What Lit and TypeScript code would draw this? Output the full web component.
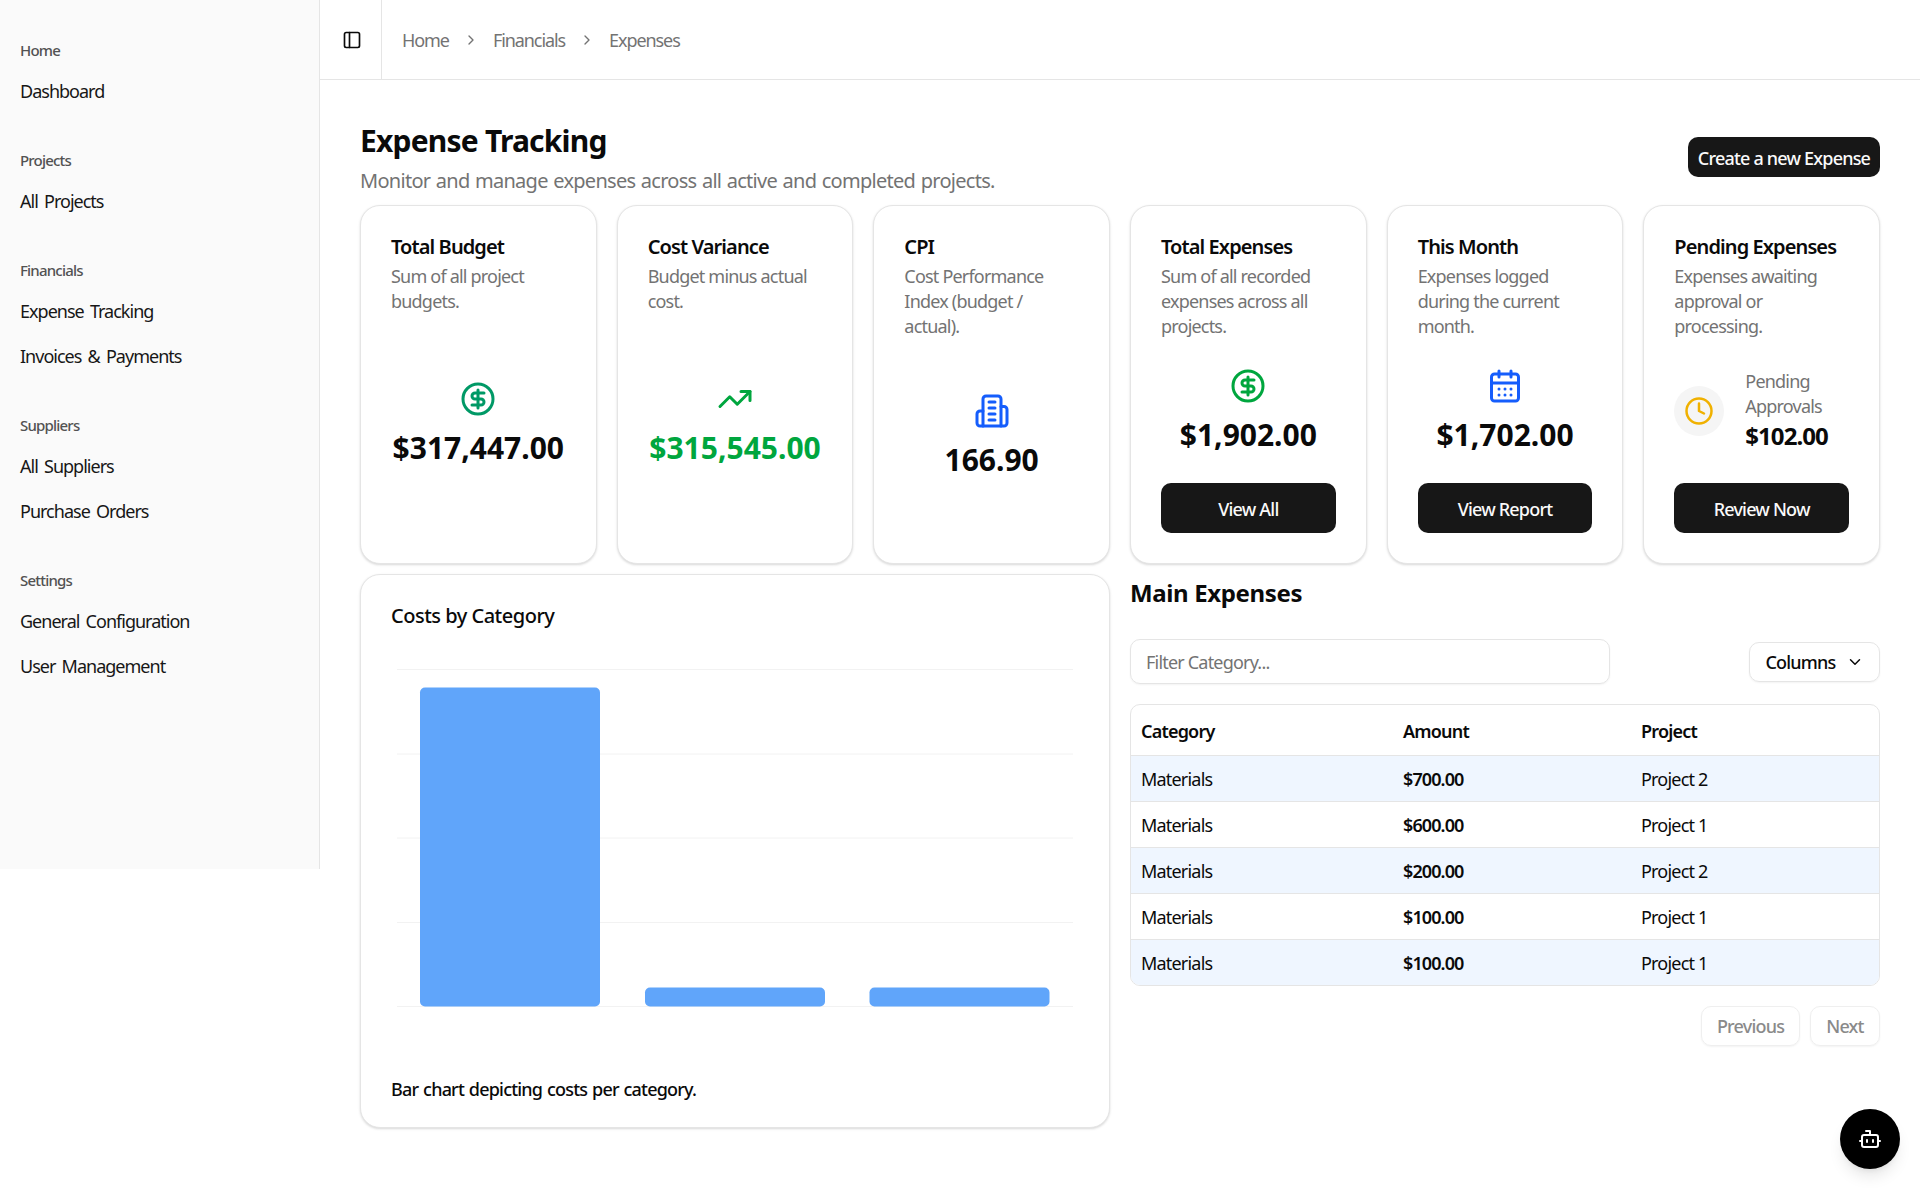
import { LitElement, css, html, svg } from "lit";
import { customElement } from "lit/decorators.js";

const icons = {
  panel: svg`<rect x="3" y="3" width="18" height="18" rx="2"/><path d="M9 3v18"/>`,
  chevronRight: svg`<path d="m9 18 6-6-6-6"/>`,
  chevronDown: svg`<path d="m6 9 6 6 6-6"/>`,
  dollar: svg`<circle cx="12" cy="12" r="10"/><path d="M16 8h-6a2 2 0 1 0 0 4h4a2 2 0 1 1 0 4H8"/><path d="M12 18V6"/>`,
  trending: svg`<polyline points="22 7 13.5 15.5 8.5 10.5 2 17"/><polyline points="16 7 22 7 22 13"/>`,
  building: svg`<path d="M6 22V4a2 2 0 0 1 2-2h8a2 2 0 0 1 2 2v18Z"/><path d="M6 12H4a2 2 0 0 0-2 2v6a2 2 0 0 0 2 2h2"/><path d="M18 9h2a2 2 0 0 1 2 2v9a2 2 0 0 1-2 2h-2"/><path d="M10 6h4"/><path d="M10 10h4"/><path d="M10 14h4"/><path d="M10 18h4"/>`,
  calendar: svg`<path d="M8 2v4"/><path d="M16 2v4"/><rect x="3" y="4" width="18" height="18" rx="2"/><path d="M3 10h18"/><path d="M8 14h.01"/><path d="M12 14h.01"/><path d="M16 14h.01"/><path d="M8 18h.01"/><path d="M12 18h.01"/><path d="M16 18h.01"/>`,
  clock: svg`<circle cx="12" cy="12" r="10"/><polyline points="12 6 12 12 16 14"/>`,
  bot: svg`<path d="M12 8V4H8"/><rect x="4" y="8" width="16" height="12" rx="2"/><path d="M2 14h2"/><path d="M20 14h2"/><path d="M15 13v2"/><path d="M9 13v2"/>`,
};

function icon(name: keyof typeof icons, size: number, color = "currentColor") {
  return html`<svg
    width=${size}
    height=${size}
    viewBox="0 0 24 24"
    fill="none"
    stroke=${color}
    stroke-width="2"
    stroke-linecap="round"
    stroke-linejoin="round"
  >${icons[name]}</svg>`;
}

const navGroups = [
  { label: "Home", items: ["Dashboard"] },
  { label: "Projects", items: ["All Projects"] },
  { label: "Financials", items: ["Expense Tracking", "Invoices & Payments"] },
  { label: "Suppliers", items: ["All Suppliers", "Purchase Orders"] },
  { label: "Settings", items: ["General Configuration", "User Management"] },
];

const rows = [
  ["Materials", "$700.00", "Project 2"],
  ["Materials", "$600.00", "Project 1"],
  ["Materials", "$200.00", "Project 2"],
  ["Materials", "$100.00", "Project 1"],
  ["Materials", "$100.00", "Project 1"],
];

const gridLines = [19.5, 104, 188, 272.5, 356.5];
const bars = [
  { x: 29, y: 37.5, w: 180, h: 319 },
  { x: 254, y: 337.5, w: 180, h: 19 },
  { x: 478.5, y: 337.5, w: 180, h: 19 },
];

@customElement("app-root")
export class AppRoot extends LitElement {
  static styles = css`
    :host {
      display: block;
      position: relative;
      width: 1920px;
      height: 1188px;
      overflow: hidden;
      background: #fff;
      color: #0a0a0a;
      font-family: "Noto Sans", "Open Sans", sans-serif;
      letter-spacing: -0.05em;
    }
    * {
      box-sizing: border-box;
      margin: 0;
      padding: 0;
    }
    svg {
      display: block;
      flex: none;
    }
    .layout {
      display: flex;
      align-items: flex-start;
    }
    .sidebar {
      width: 320px;
      height: 869px;
      flex: none;
      padding-top: 21px;
      background: #fafafa;
      border-right: 1px solid #e5e5e5;
    }
    .group {
      padding: 10px 0 18px 20px;
    }
    .group-label {
      height: 37px;
      display: flex;
      align-items: center;
      font-size: 15px;
      font-weight: 500;
      color: #525252;
    }
    .nav-item {
      height: 45px;
      display: flex;
      align-items: center;
      font-size: 18px;
      color: #171717;
      letter-spacing: -0.055em;
      word-spacing: 2.5px;
    }
    .content {
      flex: 1;
      min-width: 0;
    }
    .topbar {
      height: 80px;
      display: flex;
      align-items: center;
      border-bottom: 1px solid #e5e5e5;
    }
    .trigger {
      width: 62px;
      height: 100%;
      display: flex;
      align-items: center;
      justify-content: center;
      padding-left: 3px;
      border-right: 1px solid #e5e5e5;
      color: #0a0a0a;
    }
    .crumbs {
      display: flex;
      align-items: center;
      gap: 14px;
      margin-left: 20px;
      font-size: 18px;
      color: #737373;
      letter-spacing: -0.06em;
    }
    main {
      padding: 40px 40px 0;
    }
    .page-head {
      height: 75px;
      display: flex;
      align-items: center;
      justify-content: space-between;
    }
    h1 {
      font-size: 30px;
      line-height: 40px;
      font-weight: 700;
      padding-top: 1px;
    }
    .subtitle {
      margin-top: 6px;
      font-size: 20px;
      line-height: 28px;
      color: #737373;
      letter-spacing: -0.036em;
      word-spacing: 1px;
    }
    .btn {
      display: flex;
      align-items: center;
      justify-content: center;
      padding-top: 2px;
      border-radius: 10px;
      background: #171717;
      color: #fafafa;
      font-size: 18px;
      font-weight: 500;
    }
    .create {
      width: 192px;
      height: 40px;
      margin-top: -1px;
    }
    .stats {
      display: grid;
      grid-template-columns: repeat(6, 1fr);
      gap: 20px;
      margin-top: 10px;
    }
    .card {
      background: #fff;
      border: 1px solid #e5e5e5;
      border-radius: 20px;
      box-shadow: 0 1px 3px rgba(0, 0, 0, 0.1), 0 1px 2px rgba(0, 0, 0, 0.06);
    }
    .stat {
      height: 359px;
      display: flex;
      flex-direction: column;
      padding: 30px;
    }
    .card-title {
      font-size: 20px;
      line-height: 22px;
      font-weight: 600;
      letter-spacing: -0.045em;
    }
    .card-desc {
      margin-top: 6px;
      font-size: 18px;
      line-height: 25px;
      color: #737373;
    }
    .stat-body {
      flex: 1;
      display: flex;
      flex-direction: column;
      align-items: center;
      justify-content: center;
      gap: 12px;
    }
    .value {
      font-size: 30px;
      line-height: 38px;
      font-weight: 700;
      letter-spacing: 0;
    }
    .value.green {
      color: #00a63e;
    }
    .stat .btn {
      height: 50px;
    }
    .pending {
      flex: 1;
      display: flex;
      align-items: center;
      gap: 21px;
    }
    .clock-wrap {
      width: 50px;
      height: 50px;
      flex: none;
      display: flex;
      align-items: center;
      justify-content: center;
      border-radius: 50%;
      background: #f5f5f5;
    }
    .pending-label {
      font-size: 18px;
      line-height: 25px;
      color: #737373;
    }
    .pending-value {
      font-size: 24px;
      line-height: 34px;
      font-weight: 700;
      letter-spacing: -0.04em;
    }
    .lower {
      display: grid;
      grid-template-columns: 1fr 1fr;
      gap: 20px;
      align-items: start;
      margin-top: 10px;
    }
    .chart-card {
      padding: 30px 30px 25px;
    }
    .chart-title {
      font-size: 20px;
      line-height: 22px;
      font-weight: 500;
      letter-spacing: -0.025em;
    }
    .chart {
      margin-top: 23px;
    }
    .chart-caption {
      margin-top: 27px;
      font-size: 18px;
      line-height: 25px;
      font-weight: 500;
      letter-spacing: -0.045em;
      word-spacing: 1px;
    }
    h2 {
      font-size: 24px;
      line-height: 38px;
      font-weight: 700;
      letter-spacing: -0.015em;
    }
    .toolbar {
      display: flex;
      align-items: center;
      justify-content: space-between;
      margin-top: 27px;
    }
    .filter {
      width: 480px;
      height: 45px;
      display: flex;
      align-items: center;
      padding-left: 15px;
      border: 1px solid #e5e5e5;
      border-radius: 10px;
      font-size: 18px;
      color: #737373;
      box-shadow: 0 1px 2px rgba(0, 0, 0, 0.05);
    }
    .outline {
      height: 40px;
      display: flex;
      align-items: center;
      justify-content: center;
      border: 1px solid #e5e5e5;
      border-radius: 10px;
      font-size: 18px;
      font-weight: 500;
      box-shadow: 0 1px 2px rgba(0, 0, 0, 0.05);
    }
    .columns {
      width: 131px;
      gap: 10px;
    }
    .table-wrap {
      margin-top: 20px;
      border: 1px solid #e5e5e5;
      border-radius: 10px;
      overflow: hidden;
    }
    table {
      width: 100%;
      border-collapse: collapse;
      table-layout: fixed;
      font-size: 18px;
    }
    th {
      height: 50px;
      padding: 2px 10px 0;
      text-align: left;
      font-weight: 600;
      border-bottom: 1px solid #e5e5e5;
    }
    td {
      height: 46px;
      padding: 2px 10px 0;
      border-bottom: 1px solid #e5e5e5;
    }
    tr:last-child td {
      border-bottom: none;
    }
    tbody tr:nth-child(odd) {
      background: #eff6ff;
    }
    .amount {
      font-weight: 600;
      letter-spacing: -0.05em;
    }
    .pager {
      display: flex;
      justify-content: flex-end;
      gap: 10px;
      margin-top: 20px;
    }
    .pager .outline {
      color: #8a8a8a;
      border-color: #efefef;
    }
    .prev {
      width: 99px;
    }
    .next {
      width: 70px;
    }
    .fab {
      position: absolute;
      left: 1840px;
      top: 1109px;
      width: 60px;
      height: 60px;
      display: flex;
      align-items: center;
      justify-content: center;
      border-radius: 50%;
      background: #000;
      color: #fff;
      box-shadow: 0 10px 15px -3px rgba(0, 0, 0, 0.1), 0 4px 6px -4px rgba(0, 0, 0, 0.1);
    }
  `;

  renderStat(title: string, desc: string, body: unknown) {
    return html`<div class="card stat">
      <div class="card-title">${title}</div>
      <div class="card-desc">${desc}</div>
      ${body}
    </div>`;
  }

  renderValue(name: keyof typeof icons, color: string, value: string, green = false) {
    return html`<div class="stat-body">
      ${icon(name, 36, color)}
      <div class="value ${green ? "green" : ""}">${value}</div>
    </div>`;
  }

  render() {
    return html`
      <div class="layout">
        <aside class="sidebar">
          ${navGroups.map(
            (g) => html`<div class="group">
              <div class="group-label">${g.label}</div>
              ${g.items.map((i) => html`<div class="nav-item">${i}</div>`)}
            </div>`
          )}
        </aside>
        <div class="content">
          <header class="topbar">
            <div class="trigger">${icon("panel", 20)}</div>
            <nav class="crumbs">
              <span>Home</span>
              ${icon("chevronRight", 16)}
              <span>Financials</span>
              ${icon("chevronRight", 16)}
              <span>Expenses</span>
            </nav>
          </header>
          <main>
            <div class="page-head">
              <div>
                <h1>Expense Tracking</h1>
                <p class="subtitle">Monitor and manage expenses across all active and completed projects.</p>
              </div>
              <div class="btn create">Create a new Expense</div>
            </div>
            <section class="stats">
              ${this.renderStat("Total Budget", "Sum of all project budgets.", this.renderValue("dollar", "#009966", "$317,447.00"))}
              ${this.renderStat("Cost Variance", "Budget minus actual cost.", this.renderValue("trending", "#00a63e", "$315,545.00", true))}
              ${this.renderStat("CPI", "Cost Performance Index (budget / actual).", this.renderValue("building", "#155dfc", "166.90"))}
              ${this.renderStat(
                "Total Expenses",
                "Sum of all recorded expenses across all projects.",
                html`${this.renderValue("dollar", "#00a63e", "$1,902.00")}<div class="btn">View All</div>`
              )}
              ${this.renderStat(
                "This Month",
                "Expenses logged during the current month.",
                html`${this.renderValue("calendar", "#155dfc", "$1,702.00")}<div class="btn">View Report</div>`
              )}
              ${this.renderStat(
                "Pending Expenses",
                "Expenses awaiting approval or processing.",
                html`<div class="pending">
                    <div class="clock-wrap">${icon("clock", 30, "#f0b100")}</div>
                    <div>
                      <div class="pending-label">Pending Approvals</div>
                      <div class="pending-value">$102.00</div>
                    </div>
                  </div>
                  <div class="btn">Review Now</div>`
              )}
            </section>
            <section class="lower">
              <div class="card chart-card">
                <div class="chart-title">Costs by Category</div>
                <svg class="chart" width="688" height="400" viewBox="0 0 688 400">
                  ${gridLines.map((y) => svg`<line x1="6" x2="682" y1=${y} y2=${y} stroke="#f2f2f2" />`)}
                  ${bars.map((b) => svg`<rect x=${b.x} y=${b.y} width=${b.w} height=${b.h} rx="5" fill="#60a5fa" />`)}
                </svg>
                <div class="chart-caption">Bar chart depicting costs per category.</div>
              </div>
              <div>
                <h2>Main Expenses</h2>
                <div class="toolbar">
                  <div class="filter">Filter Category...</div>
                  <div class="outline columns">Columns ${icon("chevronDown", 18)}</div>
                </div>
                <div class="table-wrap">
                  <table>
                    <colgroup>
                      <col style="width: 262px" />
                      <col style="width: 238px" />
                      <col />
                    </colgroup>
                    <thead>
                      <tr><th>Category</th><th>Amount</th><th>Project</th></tr>
                    </thead>
                    <tbody>
                      ${rows.map(
                        (r) => html`<tr>
                          <td>${r[0]}</td>
                          <td class="amount">${r[1]}</td>
                          <td>${r[2]}</td>
                        </tr>`
                      )}
                    </tbody>
                  </table>
                </div>
                <div class="pager">
                  <div class="outline prev">Previous</div>
                  <div class="outline next">Next</div>
                </div>
              </div>
            </section>
          </main>
        </div>
      </div>
      <div class="fab">${icon("bot", 24)}</div>
    `;
  }
}
